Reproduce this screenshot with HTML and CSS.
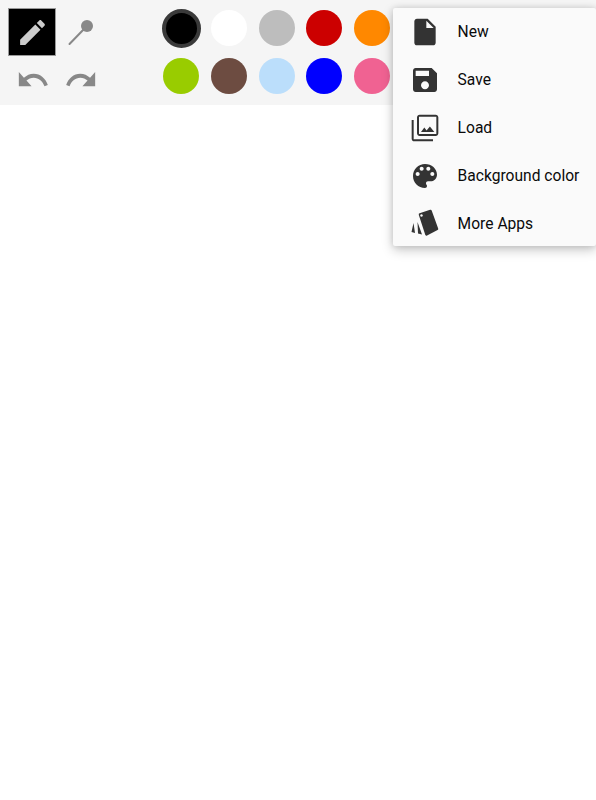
FILE: index.html
```html
<!DOCTYPE html>
<html lang="en">
<head>
<meta charset="utf-8">
<title>Draw</title>
<link rel="stylesheet" href="styles.css">
</head>
<body>
<header class="toolbar">
  <div class="tools">
    <button class="tool tool-active"><svg class="ic-pencil" viewBox="0 0 24 24"><path d="M3 17.25V21h3.75L17.81 9.94l-3.75-3.75L3 17.25zM20.71 7.04c.39-.39.39-1.02 0-1.41l-2.34-2.34c-.39-.39-1.02-.39-1.41 0l-1.83 1.83 3.75 3.75 1.83-1.83z"/></svg></button>
    <button class="tool"><svg class="ic-brush" viewBox="0 0 48 48"><circle cx="31" cy="18" r="6"/><path class="stem" d="M13.5 36L29 20"/></svg></button>
    <button class="tool"><svg class="ic-hist" viewBox="0 0 24 24" preserveAspectRatio="none"><path d="M12.5 8c-2.65 0-5.05.99-6.9 2.6L2 7v9h9l-3.62-3.62c1.39-1.16 3.16-1.88 5.12-1.88 3.54 0 6.55 2.31 7.6 5.5l2.37-.78C21.08 11.03 17.15 8 12.5 8z"/></svg></button>
    <button class="tool"><svg class="ic-hist" viewBox="0 0 24 24" preserveAspectRatio="none"><path d="M18.4 10.6C16.55 8.99 14.15 8 11.5 8c-4.65 0-8.58 3.03-9.96 7.22L3.9 16c1.05-3.19 4.05-5.5 7.6-5.5 1.95 0 3.73.72 5.12 1.88L13 16h9V7l-3.6 3.6z"/></svg></button>
  </div>
  <div class="swatches">
    <span class="swatch swatch-current c-black"></span>
    <span class="swatch c-white"></span>
    <span class="swatch c-grey"></span>
    <span class="swatch c-red"></span>
    <span class="swatch c-orange"></span>
    <span class="swatch c-lime"></span>
    <span class="swatch c-brown"></span>
    <span class="swatch c-sky"></span>
    <span class="swatch c-blue"></span>
    <span class="swatch c-pink"></span>
  </div>
</header>
<main class="canvas"></main>
<nav class="menu">
  <div class="menu-row"><svg class="menu-ic" viewBox="0 0 24 24"><path d="M6 2c-1.1 0-1.99.9-1.99 2L4 20c0 1.1.89 2 1.99 2H18c1.1 0 2-.9 2-2V8l-6-6H6zm7 7V3.5L18.5 9H13z"/></svg><span>New</span></div>
  <div class="menu-row"><svg class="menu-ic" viewBox="0 0 24 24"><path d="M17 3H5c-1.11 0-2 .9-2 2v14c0 1.1.89 2 2 2h14c1.1 0 2-.9 2-2V7l-4-4zm-5 16c-1.66 0-3-1.34-3-3s1.34-3 3-3 3 1.34 3 3-1.34 3-3 3zm3-10H5V5h10v4z"/></svg><span>Save</span></div>
  <div class="menu-row"><svg class="menu-ic" viewBox="0 0 24 24"><path fill-rule="evenodd" d="M8 2h12c1.1 0 2 .9 2 2v12c0 1.1-.9 2-2 2H8c-1.1 0-2-.9-2-2V4c0-1.100.9-2 2-2zM7.500 3.500v13h13v-13h-13z"/><path d="M11.500 11.670l1.690 2.260 2.480-3.100L19 15H9zM2 6h1.500v14.500H18V22H4c-1.100 0-2-.9-2-2z"/></svg><span>Load</span></div>
  <div class="menu-row"><svg class="menu-ic" viewBox="0 0 24 24"><path d="M12 3c-4.97 0-9 4.03-9 9s4.03 9 9 9c.83 0 1.5-.67 1.5-1.5 0-.39-.15-.74-.39-1.01-.23-.26-.38-.61-.38-.99 0-.83.67-1.5 1.5-1.5H16c2.76 0 5-2.24 5-5 0-4.42-4.03-8-9-8zm-5.500 9c-.83 0-1.500-.67-1.500-1.500S5.670 9 6.500 9 8 9.670 8 10.500 7.330 12 6.500 12zm3-4C8.670 8 8 7.330 8 6.500S8.670 5 9.500 5s1.500.67 1.500 1.500S10.330 8 9.500 8zm5 0c-.83 0-1.500-.67-1.500-1.500S13.670 5 14.500 5s1.500.67 1.500 1.500S15.330 8 14.500 8zm3 4c-.83 0-1.500-.67-1.500-1.500S16.670 9 17.500 9s1.500.67 1.500 1.500-.67 1.500-1.500 1.500z"/></svg><span>Background color</span></div>
  <div class="menu-row"><svg class="menu-ic" viewBox="0 0 32 32"><path class="card" d="M11 6.500L21.500 3 28 21l-10.500 5.500z"/><circle class="hole" cx="12.500" cy="7.500" r="1.200"/><path d="M8.500 14l4.500 12.500-4-1zM4.500 15L6 25l-3.500-1z"/></svg><span>More Apps</span></div>
</nav>
</body>
</html>
```
FILE: styles.css
```css
* { box-sizing: border-box; }
html, body { margin: 0; height: 100%; }
body { background: #fff; font-family: Roboto, "Noto Sans", sans-serif; }
.toolbar { display: flex; height: 105px; padding: 8px; background: #f5f5f5; }
.tools { display: grid; grid-template-columns: repeat(2, 48px); grid-auto-rows: 48px; width: 149.3px; }
.tool { display: flex; align-items: center; justify-content: center; padding: 0; border: 0; background: none; }
.tool-active { background: #000; border: 1px solid #999; }
.tool svg { display: block; }
.ic-pencil { width: 33px; height: 33px; fill: #ccc; }
.ic-brush { width: 48px; height: 48px; fill: #888; }
.stem { stroke: #888; stroke-width: 2; stroke-linecap: round; fill: none; }
.ic-hist { width: 34px; height: 38px; margin-left: 2px; fill: #888; }
.swatches { display: grid; grid-template-columns: repeat(5, 47.75px); grid-auto-rows: 48px; justify-items: center; align-items: center; margin-top: -4px; }
.swatch { display: block; width: 36px; height: 36px; border-radius: 50%; }
.swatch-current { width: 39px; height: 39px; border: 4px solid #3a3a3a; }
.c-black { background: #000; }
.c-white { background: #fff; }
.c-grey { background: #bdbdbd; }
.c-red { background: #cc0000; }
.c-orange { background: #ff8800; }
.c-lime { background: #99cc00; }
.c-brown { background: #6d4c41; }
.c-sky { background: #bbdefb; }
.c-blue { background: #0000ff; }
.c-pink { background: #f06292; }
.canvas { height: 695px; background: #fff; }
.menu { position: absolute; top: 8px; right: 0; width: 203px; height: 238px; padding-top: .2px; background: #fafafa; border-radius: 2px; box-shadow: 0 4px 12px rgba(0,0,0,.22), 0 0 6px rgba(0,0,0,.12); }
.menu-row { display: flex; align-items: center; height: 47.9px; padding-left: 16px; font-size: 15.6px; color: #0a0a0a; }
.menu-ic { width: 32px; height: 32px; margin-right: 16.600px; fill: #333; flex: none; }
.card { stroke: #333; stroke-width: 2.500; stroke-linejoin: round; }
.hole { fill: #fafafa; }
```
